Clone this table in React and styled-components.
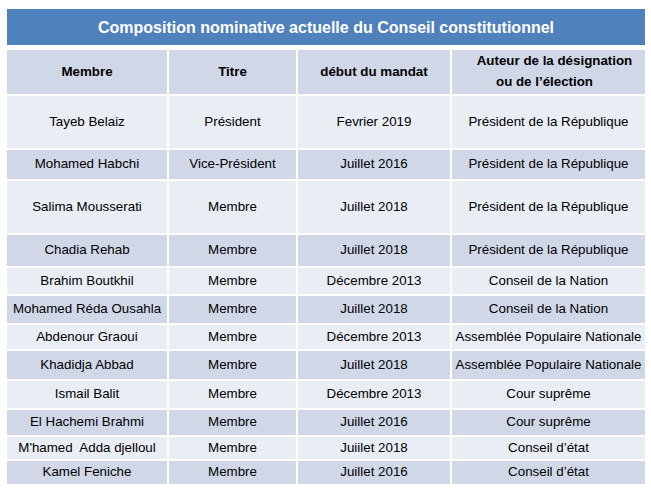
import styled, { createGlobalStyle } from "styled-components";

const GlobalStyle = createGlobalStyle`
  body {
    margin: 0;
    background: #ffffff;
    font-family: "Liberation Sans", Arial, sans-serif;
  }
`;

const Page = styled.div`
  padding: 9px 0 0 7px;
`;

const Board = styled.div`
  width: 638px;
  display: flex;
  flex-direction: column;
  gap: 2px;
`;

const Title = styled.div`
  height: 36px;
  margin-bottom: 3px;
  background: #4f81bd;
  color: #ffffff;
  font-size: 16px;
  font-weight: bold;
  display: flex;
  align-items: center;
  justify-content: center;
  padding-top: 1px;
  box-sizing: border-box;
`;

const Row = styled.div`
  display: grid;
  grid-template-columns: 160px 127px 152px 193px;
  gap: 2px;
  height: ${(p) => p.$h}px;
`;

const Cell = styled.div`
  display: flex;
  flex-direction: column;
  align-items: center;
  justify-content: center;
  text-align: center;
  white-space: pre;
  padding-bottom: 2px;
  color: #000000;
  font-size: 13.33px;
  font-weight: ${(p) => (p.$head ? "bold" : "normal")};
  background: ${(p) => (p.$light ? "#e9edf4" : "#d0d8e8")};
`;

const Line = styled.span`
  line-height: 21px;
  margin-left: ${(p) => p.$shift || 0}px;
`;

const members = [
  ["Tayeb Belaiz", "Président", "Fevrier 2019", "Président de la République", 52],
  ["Mohamed Habchi", "Vice-Président", "Juillet 2016", "Président de la République", 29],
  ["Salima Mousserati", "Membre", "Juillet 2018", "Président de la République", 52],
  ["Chadia Rehab", "Membre", "Juillet 2018", "Président de la République", 31],
  ["Brahim Boutkhil", "Membre", "Décembre 2013", "Conseil de la Nation", 26],
  ["Mohamed Réda Ousahla", "Membre", "Juillet 2018", "Conseil de la Nation", 27],
  ["Abdenour Graoui", "Membre", "Décembre 2013", "Assemblée Populaire Nationale", 24],
  ["Khadidja Abbad", "Membre", "Juillet 2018", "Assemblée Populaire Nationale", 28],
  ["Ismail Balit", "Membre", "Décembre 2013", "Cour suprême", 27],
  ["El Hachemi Brahmi", "Membre", "Juillet 2016", "Cour suprême", 25],
  ["M'hamed  Adda djelloul", "Membre", "Juiilet 2018", "Conseil d’état", 22],
  ["Kamel Feniche", "Membre", "Juillet 2016", "Conseil d’état", 23],
];

export default function App() {
  return (
    <Page>
      <GlobalStyle />
      <Board>
        <Title>Composition nominative actuelle du Conseil constitutionnel</Title>
        <Row $h={44}>
          <Cell $head>Membre</Cell>
          <Cell $head>Titre</Cell>
          <Cell $head>début du mandat</Cell>
          <Cell $head>
            <Line $shift={12}>Auteur de la désignation</Line>
            <Line $shift={-8}>ou de l’élection</Line>
          </Cell>
        </Row>
        {members.map(([name, title, start, author, h], i) => (
          <Row key={name} $h={h}>
            <Cell $light={i % 2 === 0}>{name}</Cell>
            <Cell $light={i % 2 === 0}>{title}</Cell>
            <Cell $light={i % 2 === 0}>{start}</Cell>
            <Cell $light={i % 2 === 0}>{author}</Cell>
          </Row>
        ))}
      </Board>
    </Page>
  );
}
